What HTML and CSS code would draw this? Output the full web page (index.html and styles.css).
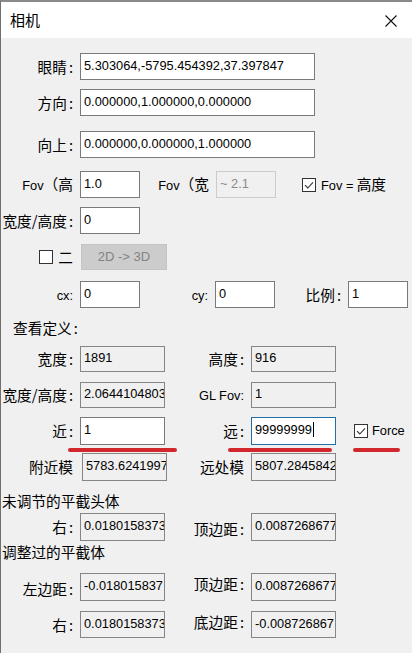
FILE: index.html
```html
<!DOCTYPE html>
<html lang="zh">
<head>
<meta charset="utf-8">
<title>相机</title>
<link rel="stylesheet" href="styles.css">
</head>
<body>
<div class="window">
  <div class="titlebar">
    <span class="title">相机</span>
    <svg class="close" width="12" height="12" viewBox="0 0 12 12"><path d="M0.5 0.5 L11.5 11.5 M11.5 0.5 L0.5 11.5" stroke="#111" stroke-width="1.1" fill="none"/></svg>
  </div>
  <div class="content">
    <div class="row h27 r-eye">
      <div class="lbl">眼睛<span class="c">:</span></div>
      <div class="field wide">5.303064,-5795.454392,37.397847</div>
    </div>
    <div class="row h27 r-dir">
      <div class="lbl">方向<span class="c">:</span></div>
      <div class="field wide">0.000000,1.000000,0.000000</div>
    </div>
    <div class="row h27 r-up">
      <div class="lbl">向上<span class="c">:</span></div>
      <div class="field wide">0.000000,0.000000,1.000000</div>
    </div>
    <div class="row h27 r-fov">
      <div class="lbl"><span class="lat">Fov</span>（高</div>
      <div class="field small">1.0</div>
      <div class="lbl lbl-fov2"><span class="lat">Fov</span>（宽</div>
      <div class="field small disabled">~ 2.1</div>
      <span class="check fov-check"><svg width="14" height="14" viewBox="0 0 14 14"><path d="M3 7.2 L5.8 10 L11 4.3" stroke="#333" stroke-width="1.1" fill="none"/></svg></span>
      <span class="check-text"><span class="lat">Fov =</span> 高度</span>
    </div>
    <div class="row h27 r-aspect">
      <div class="lbl">宽度/高度<span class="c">:</span></div>
      <div class="field small">0</div>
    </div>
    <div class="row h26 r-2d">
      <div class="lbl lbl-2d"><span class="check"></span><span class="two">二</span></div>
      <div class="btn">2D -&gt; 3D</div>
    </div>
    <div class="row h27 r-cx">
      <div class="lbl"><span class="lat">cx:</span></div>
      <div class="field small">0</div>
      <div class="lbl lbl-cy"><span class="lat">cy:</span></div>
      <div class="field small">0</div>
      <div class="lbl lbl-scale">比例<span class="c">:</span></div>
      <div class="field small">1</div>
    </div>

    <div class="heading h-view">查看定义<span class="c">:</span></div>

    <div class="row h26 r-size">
      <div class="lbl">宽度<span class="c">:</span></div>
      <div class="field mid ro">1891</div>
      <div class="lbl lbl-2">高度<span class="c">:</span></div>
      <div class="field mid ro">916</div>
    </div>
    <div class="row h26 r-gl">
      <div class="lbl">宽度/高度<span class="c">:</span></div>
      <div class="field mid ro">2.0644104803</div>
      <div class="lbl lbl-2"><span class="lat">GL Fov:</span></div>
      <div class="field mid ro">1</div>
    </div>
    <div class="row h28 r-near">
      <div class="lbl">近<span class="c">:</span></div>
      <div class="field mid">1</div>
      <div class="lbl lbl-2">远<span class="c">:</span></div>
      <div class="field mid focus">99999999<span class="caret"></span></div>
      <span class="check force-check"><svg width="14" height="14" viewBox="0 0 14 14"><path d="M3 7.2 L5.8 10 L11 4.3" stroke="#333" stroke-width="1.1" fill="none"/></svg></span>
      <span class="check-text force-text lat">Force</span>
      <span class="mark mark-1"></span>
      <span class="mark mark-2"></span>
      <span class="mark mark-3"></span>
    </div>
    <div class="row h28 r-model">
      <div class="lbl lbl-model">附近模</div>
      <div class="field mid ro">5783.6241997</div>
      <div class="lbl lbl-model2">远处模</div>
      <div class="field mid ro">5807.2845842</div>
    </div>

    <div class="heading h-untuned">未调节的平截头体</div>
    <div class="row h28 r-un">
      <div class="lbl">右<span class="c">:</span></div>
      <div class="field mid ro">0.0180158373</div>
      <div class="lbl lbl-2 low">顶边距<span class="c">:</span></div>
      <div class="field mid ro">0.0087268677</div>
    </div>

    <div class="heading h-tuned">调整过的平截体</div>
    <div class="row h28 r-left">
      <div class="lbl low">左边距<span class="c">:</span></div>
      <div class="field mid ro">-0.018015837</div>
      <div class="lbl lbl-2 high">顶边距<span class="c">:</span></div>
      <div class="field mid ro">0.0087268677</div>
    </div>
    <div class="row h27 r-right">
      <div class="lbl">右<span class="c">:</span></div>
      <div class="field mid ro">0.0180158373</div>
      <div class="lbl lbl-2 high">底边距<span class="c">:</span></div>
      <div class="field mid ro">-0.008726867</div>
    </div>
  </div>
</div>
</body>
</html>
```

FILE: styles.css
```css
html, body {
  margin: 0;
  padding: 0;
  background: #f0f0f0;
}

.window {
  width: 411px;
  height: 651px;
  border-top: 2px solid #8a8a8a;
  border-left: 1px solid #6f6f6f;
  background: #f0f0f0;
  overflow: hidden;
  font-family: "Noto Sans CJK SC", "Noto Sans", sans-serif;
  font-size: 14.7px;
  color: #000;
}

.titlebar {
  height: 36px;
  background: #fff;
  display: flex;
  align-items: center;
  justify-content: space-between;
  padding: 0 15px 0 9px;
}

.title {
  font-size: 15px;
  line-height: 20px;
}

.close {
  display: block;
  margin-top: 1px;
}

.content {
  padding-top: 15px;
}

.row {
  display: flex;
  align-items: center;
}

.h26 { height: 26px; }
.h27 { height: 27px; }
.h28 { height: 28px; }

.r-dir { margin-top: 9px; }
.r-up { margin-top: 15px; }
.r-fov { margin-top: 13px; }
.r-aspect { margin-top: 9px; }
.r-2d { margin-top: 10px; }
.r-cx { margin-top: 11px; }
.r-size { margin-top: 8px; }
.r-gl { margin-top: 10px; }
.r-near { margin-top: 9px; position: relative; }
.r-model { margin-top: 8px; }
.r-un { margin-top: 2px; }
.r-left { margin-top: 11px; }
.r-right { margin-top: 10px; }

.lbl {
  flex: none;
  width: 72px;
  margin-right: 7px;
  text-align: right;
  line-height: 20px;
  white-space: nowrap;
}

.lbl .c,
.heading .c {
  margin-left: 2px;
}

.lat {
  font-family: "Liberation Sans", Arial, sans-serif;
  font-size: 12.8px;
}

.lbl.low { position: relative; top: 2px; }
.lbl.high { position: relative; top: -3px; }

.lbl-fov2 { width: 69px; }
.lbl-cy { width: 68px; }
.lbl-scale { width: 66px; }
.lbl-2 { width: 79px; }
.lbl-model { margin-right: 9px; }
.lbl-model2 { width: 77px; }

.lbl-2d {
  display: flex;
  justify-content: flex-end;
  align-items: center;
  margin-right: 8px;
}

.two {
  margin-left: 5px;
}

.field {
  flex: none;
  box-sizing: border-box;
  height: 100%;
  display: flex;
  align-items: center;
  padding: 0 0 3px 3px;
  border: 1px solid #7a7a7a;
  background: #fff;
  white-space: nowrap;
  overflow: hidden;
  font-family: "Liberation Sans", Arial, sans-serif;
  font-size: 12.8px;
  color: #000;
}

.wide { width: 235px; }
.small { width: 60px; }
.mid { width: 85px; }

.field.ro {
  background: #f0f0f0;
  border-color: #858585;
}

.field.disabled {
  background: #f0f0f0;
  border-color: #cccccc;
  color: #8a8a8a;
}

.field.focus {
  border-color: #1f6ea6;
}

.caret {
  display: inline-block;
  width: 1px;
  height: 15px;
  background: #000;
  margin-left: 1px;
}

.check {
  flex: none;
  box-sizing: border-box;
  display: block;
  width: 14px;
  height: 14px;
  border: 1px solid #333;
  background: #fff;
}

.check svg {
  display: block;
  margin: -1px 0 0 -1px;
}

.fov-check { margin-left: 26px; }
.force-check { margin-left: 18px; }

.check-text {
  margin-left: 5px;
  line-height: 20px;
  white-space: nowrap;
}

.force-text { margin-left: 4px; }

.btn {
  flex: none;
  box-sizing: border-box;
  width: 86px;
  height: 100%;
  background: #cccccc;
  border: 1px solid #c4c4c4;
  color: #838383;
  font-family: "Liberation Sans", Arial, sans-serif;
  font-size: 13px;
  display: flex;
  align-items: center;
  justify-content: center;
  padding-bottom: 1px;
}

.heading {
  height: 20px;
  line-height: 20px;
  white-space: nowrap;
}

.h-view { margin-top: 10px; padding-left: 12px; }
.h-untuned { margin-top: 10px; padding-left: 1px; }
.h-tuned { margin-top: 1px; padding-left: 1px; }

.mark {
  position: absolute;
  top: 31px;
  height: 4px;
  border-radius: 2px;
  background: #d3272e;
}

.mark-1 { left: 67px; width: 109px; }
.mark-2 { left: 227px; width: 104px; }
.mark-3 { left: 352px; width: 47px; }
```
